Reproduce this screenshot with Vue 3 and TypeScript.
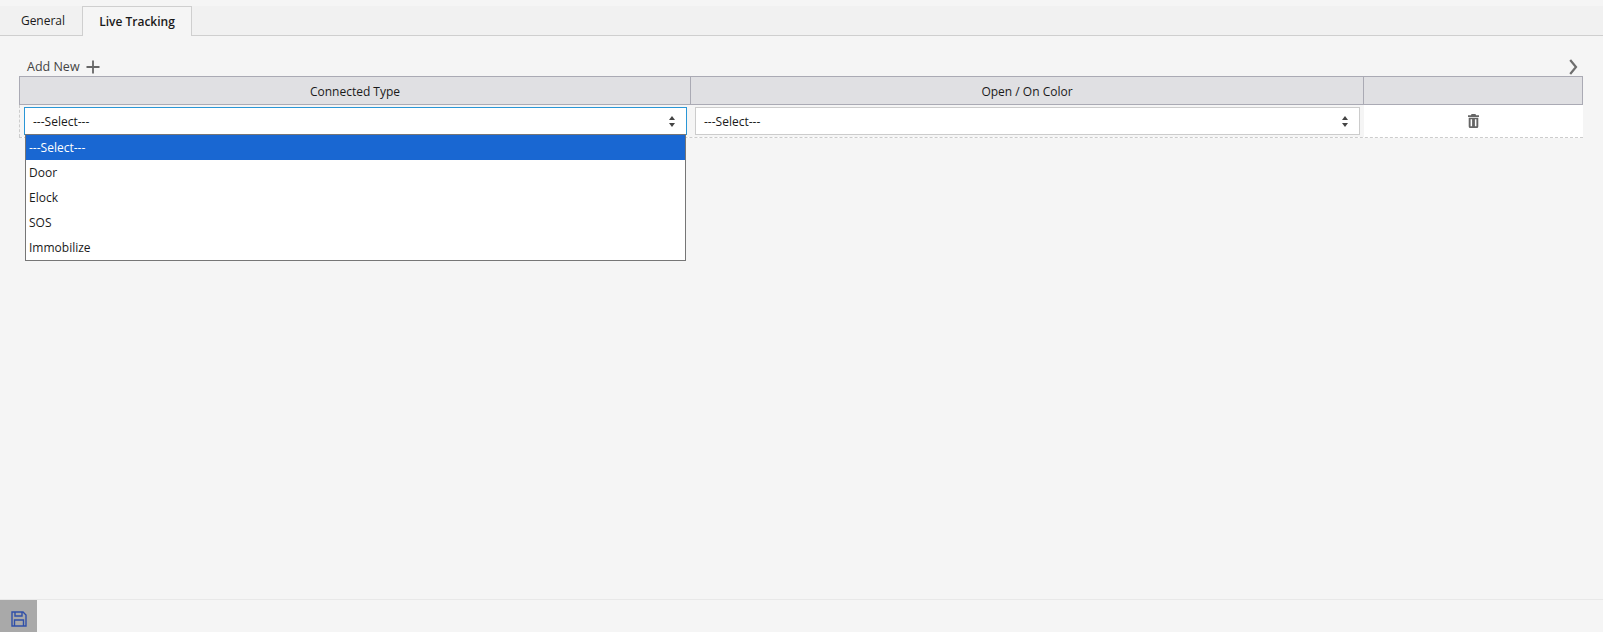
<script setup lang="ts">
const options: string[] = ['---Select---', 'Door', 'Elock', 'SOS', 'Immobilize']
</script>

<template>
  <div class="page">
    <nav class="tabs">
      <div class="tab">General</div>
      <div class="tab active">Live Tracking</div>
    </nav>
    <main class="content">
      <div class="toolbar">
        <span class="add">Add New
          <svg width="14" height="14" viewBox="0 0 14 14"><path d="M7 0.5v13M0.5 7h13" stroke="#666" stroke-width="1.8" fill="none" /></svg>
        </span>
        <svg class="chev" width="9" height="16" viewBox="0 0 9 16"><path d="M1.2 1l5.800 7-5.800 7" stroke="#6e6e6e" stroke-width="2.200" fill="none" /></svg>
      </div>
      <div class="table">
        <div class="head">
          <div class="th">Connected Type</div>
          <div class="th">Open / On Color</div>
          <div class="th"></div>
        </div>
        <div class="row">
          <div class="cell first">
            <div class="select focus">
              <span>---Select---</span>
              <svg class="updown" width="6" height="11" viewBox="0 0 6 11"><path d="M3 0L6 4H0zM3 11L0 7h6z" fill="#444" /></svg>
            </div>
            <ul class="dropdown">
              <li v-for="(o, i) in options" :key="o" :class="{ hl: i === 0 }">{{ o }}</li>
            </ul>
          </div>
          <div class="cell second">
            <div class="select">
              <span>---Select---</span>
              <svg class="updown" width="6" height="11" viewBox="0 0 6 11"><path d="M3 0L6 4H0zM3 11L0 7h6z" fill="#444" /></svg>
            </div>
          </div>
          <div class="cell action">
            <svg width="11" height="14" viewBox="0 0 11 14"><path fill="#666" fill-rule="evenodd" d="M3.500 0h4L8 1.300h3V3H0V1.300h3zM.7 3.800h9.600V12.500A1.500 1.500 0 0 1 8.800 14H2.200A1.500 1.500 0 0 1 .7 12.500zM2.600 5.200V12.300h1.500V5.200zM6.900 5.200V12.300h1.500V5.200z" /></svg>
          </div>
        </div>
      </div>
    </main>
    <footer class="footer">
      <button class="save">
        <svg width="16" height="16" viewBox="0 0 16 16"><path d="M1 1h11l3 3v11H1zM4 1v4h7V1M3.500 15V9h9v6" fill="none" stroke="#2f4fa8" stroke-width="1.400" /></svg>
      </button>
    </footer>
  </div>
</template>

<style>
html, body { margin: 0; background: #f5f5f5; }
</style>

<style scoped>
.page {
  height: 632px;
  display: flex;
  flex-direction: column;
  font-family: "Open Sans", sans-serif;
  font-size: 12px;
  color: #1a1a1a;
  background: #f5f5f5;
  overflow: hidden;
}
.tabs {
  margin-top: 6px;
  height: 29px;
  display: flex;
  background: #f1f1f1;
  border-bottom: 1px solid #cfcfcf;
  flex: none;
}
.tab {
  width: 82px;
  height: 29px;
  padding-left: 4px;
  text-align: center;
  line-height: 30px;
  box-sizing: border-box;
}
.tab.active {
  width: 110px;
  height: 30px;
  padding-left: 0;
  background: #f5f5f5;
  border: 1px solid #cfcfcf;
  border-bottom: 0;
  font-weight: 600;
}
.content {
  flex: 1;
  padding: 23px 20px 0 19px;
}
.toolbar {
  height: 17px;
  display: flex;
  justify-content: space-between;
  align-items: center;
  padding: 0 0 2px 8px;
  box-sizing: border-box;
}
.add {
  display: flex;
  align-items: center;
  gap: 6px;
  color: #444;
  font-size: 12.5px;
}
.chev {
  margin-right: 5px;
}
.table { width: 1564px; }
.head {
  display: grid;
  grid-template-columns: 671px 673px 1fr;
  height: 29px;
  box-sizing: border-box;
  background: #e0e0e3;
  border: 1px solid #aaaab4;
}
.th {
  display: flex;
  align-items: center;
  justify-content: center;
  padding-top: 1px;
  border-right: 1px solid #aaaab4;
}
.th:last-child { border-right: 0; }
.row {
  display: grid;
  grid-template-columns: 672px 673px 1fr;
  height: 33px;
  box-sizing: border-box;
  background: #fff;
  border-bottom: 1px dashed #ccc;
}
.cell {
  position: relative;
  padding: 2px 4px 0 4px;
}
.cell.first {
  border-left: 1px dashed #ccc;
  background: #f5f5f5;
}
.cell.second {
  background: #f5f5f5;
}
.select {
  height: 28px;
  box-sizing: border-box;
  background: #fff;
  border: 1px solid #ccc;
  display: flex;
  align-items: center;
  justify-content: space-between;
  padding: 0 11px 0 8px;
}
.select.focus { border-color: #2a96d6; }
.dropdown {
  position: absolute;
  left: 5px;
  top: 29px;
  width: 661px;
  margin: 0;
  padding: 0;
  list-style: none;
  background: #fff;
  border: 1px solid #767676;
  box-sizing: border-box;
  z-index: 2;
}
.dropdown li {
  height: 25px;
  line-height: 25px;
  padding-left: 3px;
}
.dropdown li.hl {
  background: #1967d2;
  color: #fff;
}
.action {
  background: #fff;
  display: flex;
  align-items: center;
  justify-content: center;
  padding: 0;
}
.footer {
  height: 33px;
  flex: none;
  border-top: 1px solid #e8e8e8;
  box-sizing: border-box;
  display: flex;
}
.save {
  width: 37px;
  height: 32px;
  border: 0;
  padding: 5px 0 0;
  background: #a9a9a9;
  display: flex;
  align-items: center;
  justify-content: center;
}
</style>
